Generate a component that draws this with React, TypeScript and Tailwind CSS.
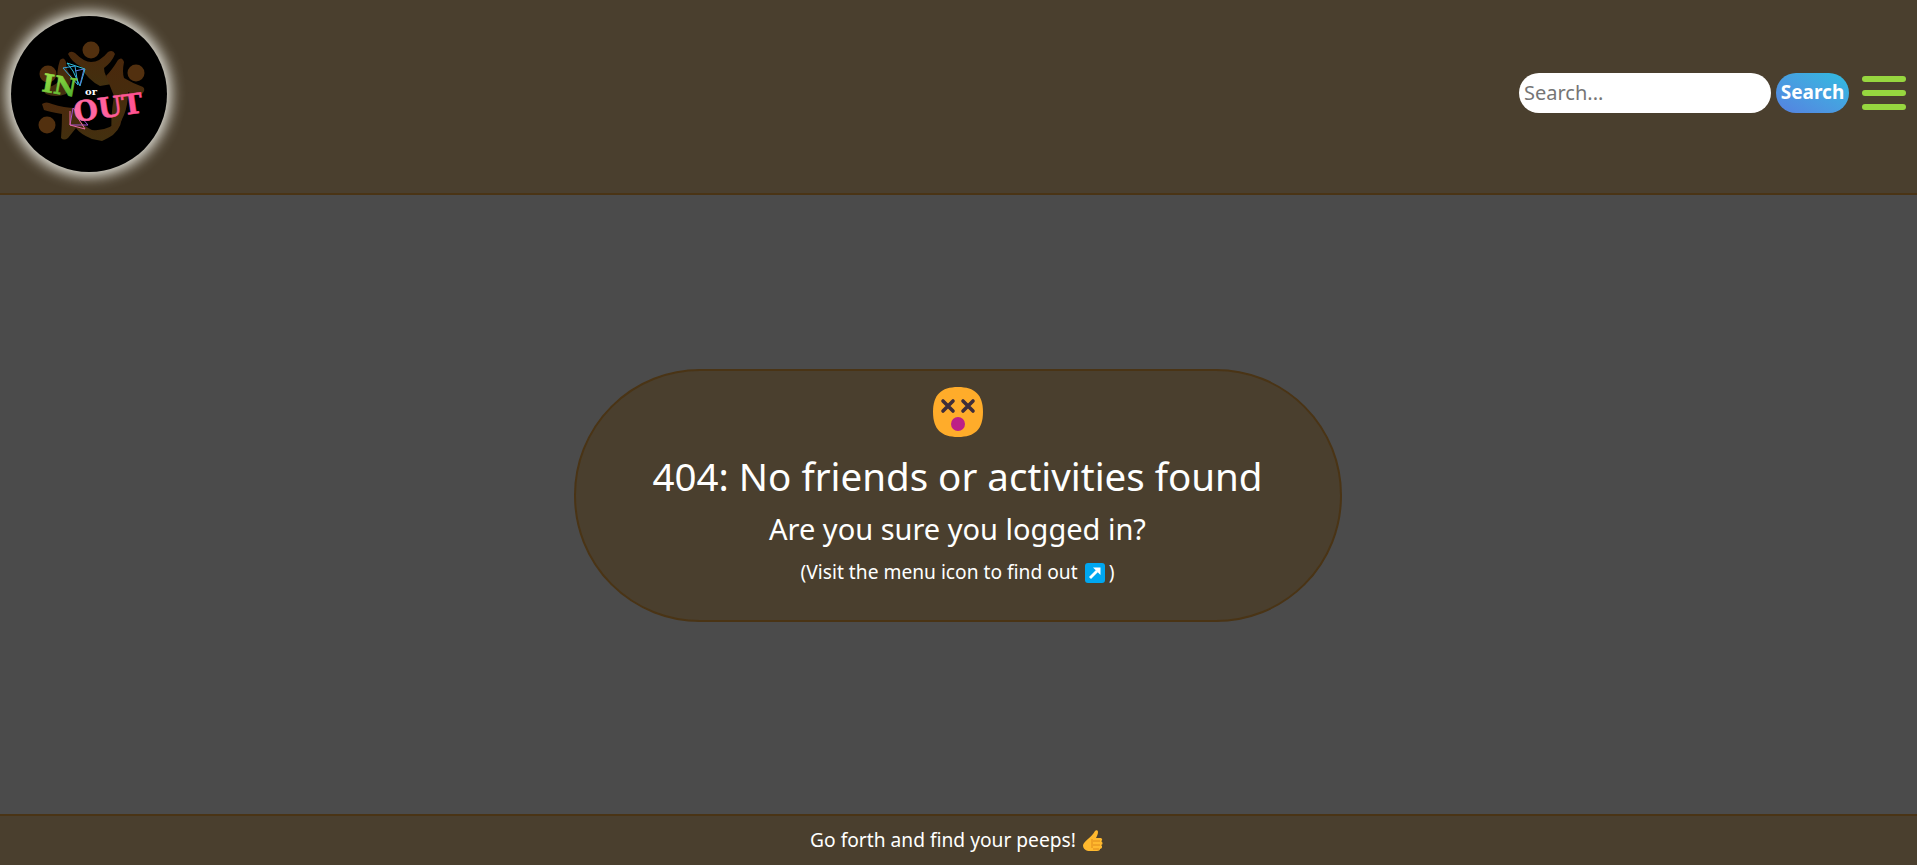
function Logo() {
    return (
        <div className="w-[156px] h-[156px] rounded-full bg-black shadow-[0_0_14px_4px_#e8e8e0] shrink-0">
            <svg width="156" height="156" viewBox="11 16 156 156">
                <defs>
                    <linearGradient id="inGrad" x1="0" y1="0" x2="1" y2="1">
                        <stop offset="0" stopColor="#a4e84a" />
                        <stop offset="1" stopColor="#46a82a" />
                    </linearGradient>
                    <linearGradient id="outGrad" x1="0" y1="0" x2="1" y2="0">
                        <stop offset="0" stopColor="#ff6fa8" />
                        <stop offset="1" stopColor="#ff4f8f" />
                    </linearGradient>
                    <linearGradient id="bodyGrad" x1="0" y1="0" x2="0" y2="1">
                        <stop offset="0" stopColor="#4a280c" />
                        <stop offset="1" stopColor="#42300f" />
                    </linearGradient>
                </defs>
                <g fill="#52300f">
                    <circle cx="91" cy="50" r="8.5" />
                    <circle cx="136" cy="73" r="8.5" />
                    <circle cx="48" cy="74" r="8.5" />
                    <circle cx="47" cy="125" r="8.5" />
                </g>
                <g fill="url(#bodyGrad)">
                    <path d="M68 54 Q70 50 75 53 Q84 62 91 62 Q100 62 108 52 Q113 49 115 54 Q112 62 104 68 Q104 76 112 84 L100 86 Q88 80 80 66 Q72 62 68 54 Z" />
                    <path d="M118 60 Q122 56 124 62 Q122 72 124 78 Q134 84 143 87 Q146 90 142 94 Q134 96 128 92 Q128 118 112 132 Q110 120 114 96 Q110 86 106 76 Q112 70 118 60 Z" />
                    <path d="M42 104 Q46 101 52 104 Q64 108 76 108 Q78 124 92 130 Q108 132 122 118 Q120 132 108 138 L102 141 L92 139 Q80 134 76 128 L68 138 Q64 141 61 138 Q62 126 62 114 Q50 112 44 110 Z" />
                    <path d="M60 60 Q64 56 66 62 Q66 72 72 76 Q70 86 66 94 Q56 98 46 94 Q42 90 46 88 Q54 86 58 82 Q56 72 60 60 Z" />
                </g>
                <g fill="none" strokeWidth="1">
                    <path d="M67 63 L85 69 L80 86 L73 71 Z" stroke="#2fc0d8" />
                    <path d="M63 68 L75 66 L78 85 Z" stroke="#38a8e0" />
                    <path d="M75 71 L84 69 L80 85" stroke="#5a80e0" />
                    <path d="M73 108 L88 125 L70 125 Z" stroke="#a050d0" />
                    <path d="M70 111 L70 125 L85 129 L76 115" stroke="#e868a0" />
                </g>
                <text x="41" y="91" transform="rotate(10 41 91)" fontFamily="'DejaVu Serif', serif" fontWeight="700" fontSize="25" fill="url(#inGrad)" stroke="url(#inGrad)" strokeWidth="0.6">IN</text>
                <text x="85" y="95" fontFamily="'DejaVu Serif', serif" fontWeight="700" fontSize="10" fill="#ffffff">or</text>
                <text x="75" y="122" transform="rotate(-8 75 122)" fontFamily="'DejaVu Serif', serif" fontWeight="700" fontSize="28" fill="url(#outGrad)" stroke="url(#outGrad)" strokeWidth="0.5">OUT</text>
            </svg>
        </div>
    )
}

function DizzyFace() {
    return (
        <svg width="50" height="50" viewBox="0 0 50 50" className="block">
            <path d="M25 0 C42 0 50 8 50 25 C50 42 42 50 25 50 C8 50 0 42 0 25 C0 8 8 0 25 0 Z" fill="#ffac2a" />
            <g stroke="#3f2d3a" strokeWidth="3.6" strokeLinecap="round">
                <path d="M10 14 L20 24 M20 14 L10 24" />
                <path d="M30 14 L40 24 M40 14 L30 24" />
            </g>
            <circle cx="25" cy="37" r="7" fill="#bd1f87" />
        </svg>
    )
}

function ArrowBox() {
    return (
        <svg width="20" height="20" viewBox="0 0 20 20" className="inline-block align-[-4px] ml-[7px] mr-[4px]">
            <rect width="20" height="20" rx="3" fill="#00a7f0" />
            <path d="M5 15 L12 8" fill="none" stroke="#ffffff" strokeWidth="2.8" />
            <path d="M8 4.5 H15.5 V12 Z" fill="#ffffff" />
        </svg>
    )
}

function ThumbsUp() {
    return (
        <svg width="20" height="21" viewBox="0 0 20 21" className="inline-block align-[-4px] ml-[7px]">
            <path d="M0 15 C2 10 8 8 12 1 C13 0 15 0 15 2 C15 4 14 6 13 8 L18 8 C20 9 19 11 18 11 C20 12 20 15 18 15 C20 16 19 19 17 19 C17 20 16 21 14 21 H7 C3 21 0 19 0 15 Z" fill="#ffb92e" />
            <path d="M9 9 L9 18 M10 11 H17 M10 15 H17 M10 19 H16" stroke="#e08a1a" strokeWidth="1" fill="none" />
        </svg>
    )
}

function App() {
    return (
        <div className="h-screen flex flex-col bg-[#4b4b4b] text-white font-['Noto_Sans',sans-serif] overflow-hidden">
            <header className="h-[195px] shrink-0 bg-[#4a3f2e] border-b-2 border-[#4a3415] flex items-start justify-between pl-[11px] pr-[11px]">
                <div className="pt-[16px]">
                    <Logo />
                </div>
                <div className="flex items-center pt-[73px]">
                    <input
                        placeholder="Search..."
                        className="w-[252px] h-[40px] rounded-full bg-white pl-[5px] pb-[2px] text-[20px] text-black placeholder:text-[#757575] outline-none"
                    />
                    <button className="w-[73px] h-[40px] ml-[5px] rounded-full bg-gradient-to-tr from-[#5580e0] to-[#2cbce0] text-white font-bold text-[19px] pb-[2px]">
                        Search
                    </button>
                    <div className="w-[44px] ml-[13px] flex flex-col gap-[8px]">
                        <div className="h-[6px] rounded-full bg-[#97d63f]"></div>
                        <div className="h-[6px] rounded-full bg-[#97d63f]"></div>
                        <div className="h-[6px] rounded-full bg-[#97d63f]"></div>
                    </div>
                </div>
            </header>
            <main className="flex-1 flex items-center justify-center pb-[18px] pr-[2px]">
                <div className="w-[768px] h-[253px] rounded-[126px] bg-[#4a3f2e] border-2 border-[#4a3415] flex flex-col items-center pt-[16px]">
                    <DizzyFace />
                    <h1 className="text-[38.5px] leading-[58px] mt-[10px]">404: No friends or activities found</h1>
                    <h2 className="text-[29px] leading-[44px] mt-[2px]">Are you sure you logged in?</h2>
                    <p className="text-[19.2px] leading-[28px] mt-[7px]">(Visit the menu icon to find out<ArrowBox />)</p>
                </div>
            </main>
            <footer className="h-[51px] shrink-0 bg-[#4a3f2e] border-t-2 border-[#4a3415] flex items-center justify-center text-[19.2px] pr-[4px]">
                <span>Go forth and find your peeps!<ThumbsUp /></span>
            </footer>
        </div>
    )
}

export default App
